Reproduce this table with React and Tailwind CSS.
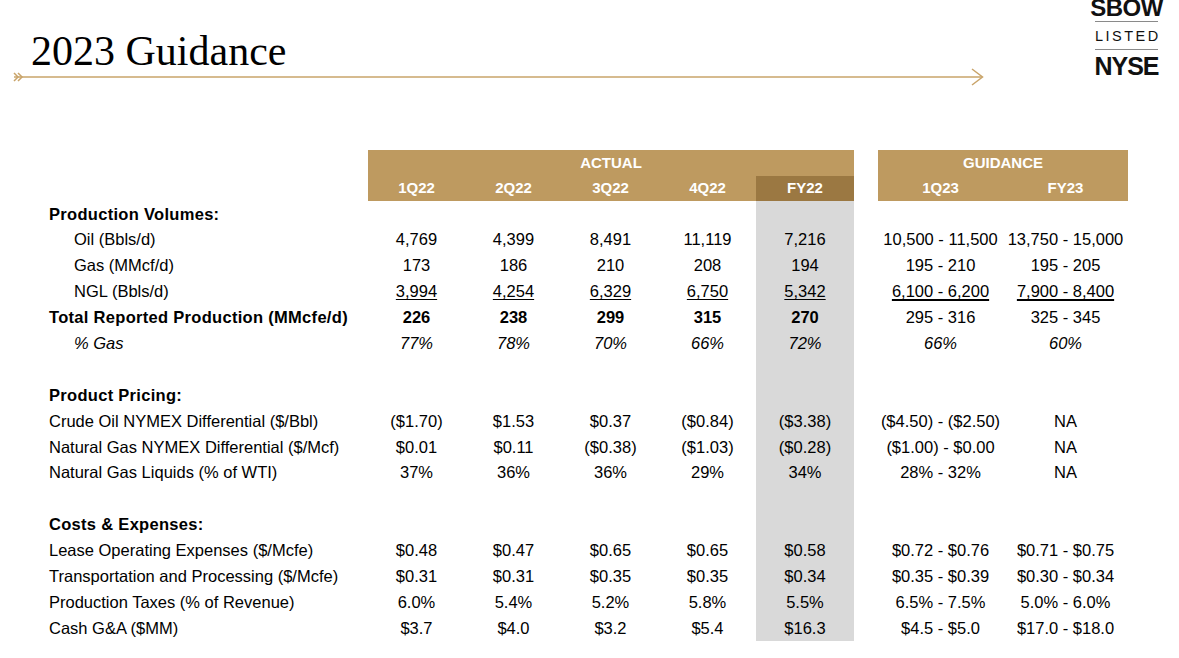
import React from 'react';

const rows = [
  { label: 'Production Volumes:', bold: true, section: true },
  { label: 'Oil (Bbls/d)', indent: true, actual: ['4,769', '4,399', '8,491', '11,119', '7,216'], guide: ['10,500 - 11,500', '13,750 - 15,000'] },
  { label: 'Gas (MMcf/d)', indent: true, actual: ['173', '186', '210', '208', '194'], guide: ['195 - 210', '195 - 205'] },
  { label: 'NGL (Bbls/d)', indent: true, underline: true, actual: ['3,994', '4,254', '6,329', '6,750', '5,342'], guide: ['6,100 - 6,200', '7,900 - 8,400'] },
  { label: 'Total Reported Production (MMcfe/d)', bold: true, actual: ['226', '238', '299', '315', '270'], guide: ['295 - 316', '325 - 345'] },
  { label: '% Gas', indent: true, italic: true, actual: ['77%', '78%', '70%', '66%', '72%'], guide: ['66%', '60%'] },
  { blank: true },
  { label: 'Product Pricing:', bold: true, section: true },
  { label: 'Crude Oil NYMEX Differential ($/Bbl)', actual: ['($1.70)', '$1.53', '$0.37', '($0.84)', '($3.38)'], guide: ['($4.50) - ($2.50)', 'NA'] },
  { label: 'Natural Gas NYMEX Differential ($/Mcf)', actual: ['$0.01', '$0.11', '($0.38)', '($1.03)', '($0.28)'], guide: ['($1.00) - $0.00', 'NA'] },
  { label: 'Natural Gas Liquids (% of WTI)', actual: ['37%', '36%', '36%', '29%', '34%'], guide: ['28% - 32%', 'NA'] },
  { blank: true },
  { label: 'Costs & Expenses:', bold: true, section: true },
  { label: 'Lease Operating Expenses ($/Mcfe)', actual: ['$0.48', '$0.47', '$0.65', '$0.65', '$0.58'], guide: ['$0.72 - $0.76', '$0.71 - $0.75'] },
  { label: 'Transportation and Processing ($/Mcfe)', actual: ['$0.31', '$0.31', '$0.35', '$0.35', '$0.34'], guide: ['$0.35 - $0.39', '$0.30 - $0.34'] },
  { label: 'Production Taxes (% of Revenue)', actual: ['6.0%', '5.4%', '5.2%', '5.8%', '5.5%'], guide: ['6.5% - 7.5%', '5.0% - 6.0%'] },
  { label: 'Cash G&A ($MM)', actual: ['$3.7', '$4.0', '$3.2', '$5.4', '$16.3'], guide: ['$4.5 - $5.0', '$17.0 - $18.0'] },
];

const gridCols = 'grid grid-cols-[368px_97px_97px_97px_97px_98px_24px_125px_125px]';

const Logo = () => (
  <div className="flex flex-col items-center w-[63px] mr-[21px] font-['Liberation_Sans',Arial,sans-serif] text-[#111]">
    <div className="text-[24px] font-bold leading-none tracking-[-0.5px] mt-[-4px]">SBOW</div>
    <div className="w-[63px] h-px bg-[#8a8a8a] mt-[1px]"></div>
    <div className="text-[14.5px] leading-none tracking-[2.5px] mr-[-2.5px] mt-[7px]">LISTED</div>
    <div className="w-[63px] h-px bg-[#8a8a8a] mt-[5px]"></div>
    <div className="text-[25px] font-bold leading-none tracking-[-1px] mt-[4px]">NYSE</div>
  </div>
);

const GuideLine = () => (
  <svg width="980" height="20" viewBox="0 0 980 20" className="block ml-[8px] mt-[-4px]">
    <line x1="6" y1="9" x2="974" y2="9" stroke="#C9A46A" strokeWidth="1.6" />
    <path d="M964 1 L974.5 9 L964 17" fill="none" stroke="#C9A46A" strokeWidth="1.5" />
    <path d="M6 5 L10 9 L6 13" fill="none" stroke="#C9A46A" strokeWidth="1.5" />
    <path d="M10 5 L14 9 L10 13" fill="none" stroke="#C9A46A" strokeWidth="1.5" />
  </svg>
);

const Row = ({ row }) => {
  if (row.blank) {
    return (
      <div className={`${gridCols} h-[25.9px]`}>
        <div className="col-span-5"></div>
        <div className="bg-[#D9D9D9]"></div>
      </div>
    );
  }
  const textStyle = `${row.bold ? 'font-bold tracking-[0.3px]' : ''} ${row.italic ? 'italic' : ''}`;
  const valueStyle = `${row.bold ? 'font-bold' : ''} ${row.italic ? 'italic' : ''} ${row.underline ? 'underline underline-offset-2' : ''}`;
  const actual = row.actual || ['', '', '', '', ''];
  const guide = row.guide || ['', ''];
  return (
    <div className={`${gridCols} h-[25.9px] items-stretch`}>
      <div className={`flex items-center whitespace-nowrap ${row.indent ? 'pl-[74px]' : 'pl-[49px]'} ${textStyle}`}>{row.label}</div>
      {actual.map((v, i) => (
        <div key={i} className={`flex items-center justify-center ${i === 4 ? 'bg-[#D9D9D9]' : ''} ${valueStyle}`}>{v}</div>
      ))}
      <div></div>
      {guide.map((v, i) => (
        <div key={i} className={`flex items-center justify-center whitespace-nowrap ${row.italic ? 'italic' : ''} ${row.underline ? 'underline underline-offset-2 decoration-[1.5px]' : ''}`}>{v}</div>
      ))}
    </div>
  );
};

const App = () => {
  return (
    <div className="w-[1179px] h-[658px] overflow-hidden bg-white text-black">
      <div className="flex justify-between h-[150px]">
        <div>
          <h1 className="ml-[31px] pt-[30px] text-[42px] leading-[42px] font-['Liberation_Serif','Times_New_Roman',serif] text-black">2023 Guidance</h1>
          <GuideLine />
        </div>
        <Logo />
      </div>

      <div className="font-['Liberation_Sans',Arial,sans-serif] text-[16.5px] text-black">
        <div className={`${gridCols} h-[25.5px] text-white font-bold text-[15px]`}>
          <div></div>
          <div className="col-span-5 bg-[#BE9A60] flex items-center justify-center">ACTUAL</div>
          <div></div>
          <div className="col-span-2 bg-[#BE9A60] flex items-center justify-center">GUIDANCE</div>
        </div>
        <div className={`${gridCols} h-[25.5px] text-white font-bold text-[15px]`}>
          <div></div>
          <div className="bg-[#BE9A60] flex items-center justify-center">1Q22</div>
          <div className="bg-[#BE9A60] flex items-center justify-center">2Q22</div>
          <div className="bg-[#BE9A60] flex items-center justify-center">3Q22</div>
          <div className="bg-[#BE9A60] flex items-center justify-center">4Q22</div>
          <div className="bg-[#9B7842] flex items-center justify-center">FY22</div>
          <div></div>
          <div className="bg-[#BE9A60] flex items-center justify-center">1Q23</div>
          <div className="bg-[#BE9A60] flex items-center justify-center">FY23</div>
        </div>
        {rows.map((row, i) => (
          <Row key={i} row={row} />
        ))}
      </div>
    </div>
  );
};

export default App;
